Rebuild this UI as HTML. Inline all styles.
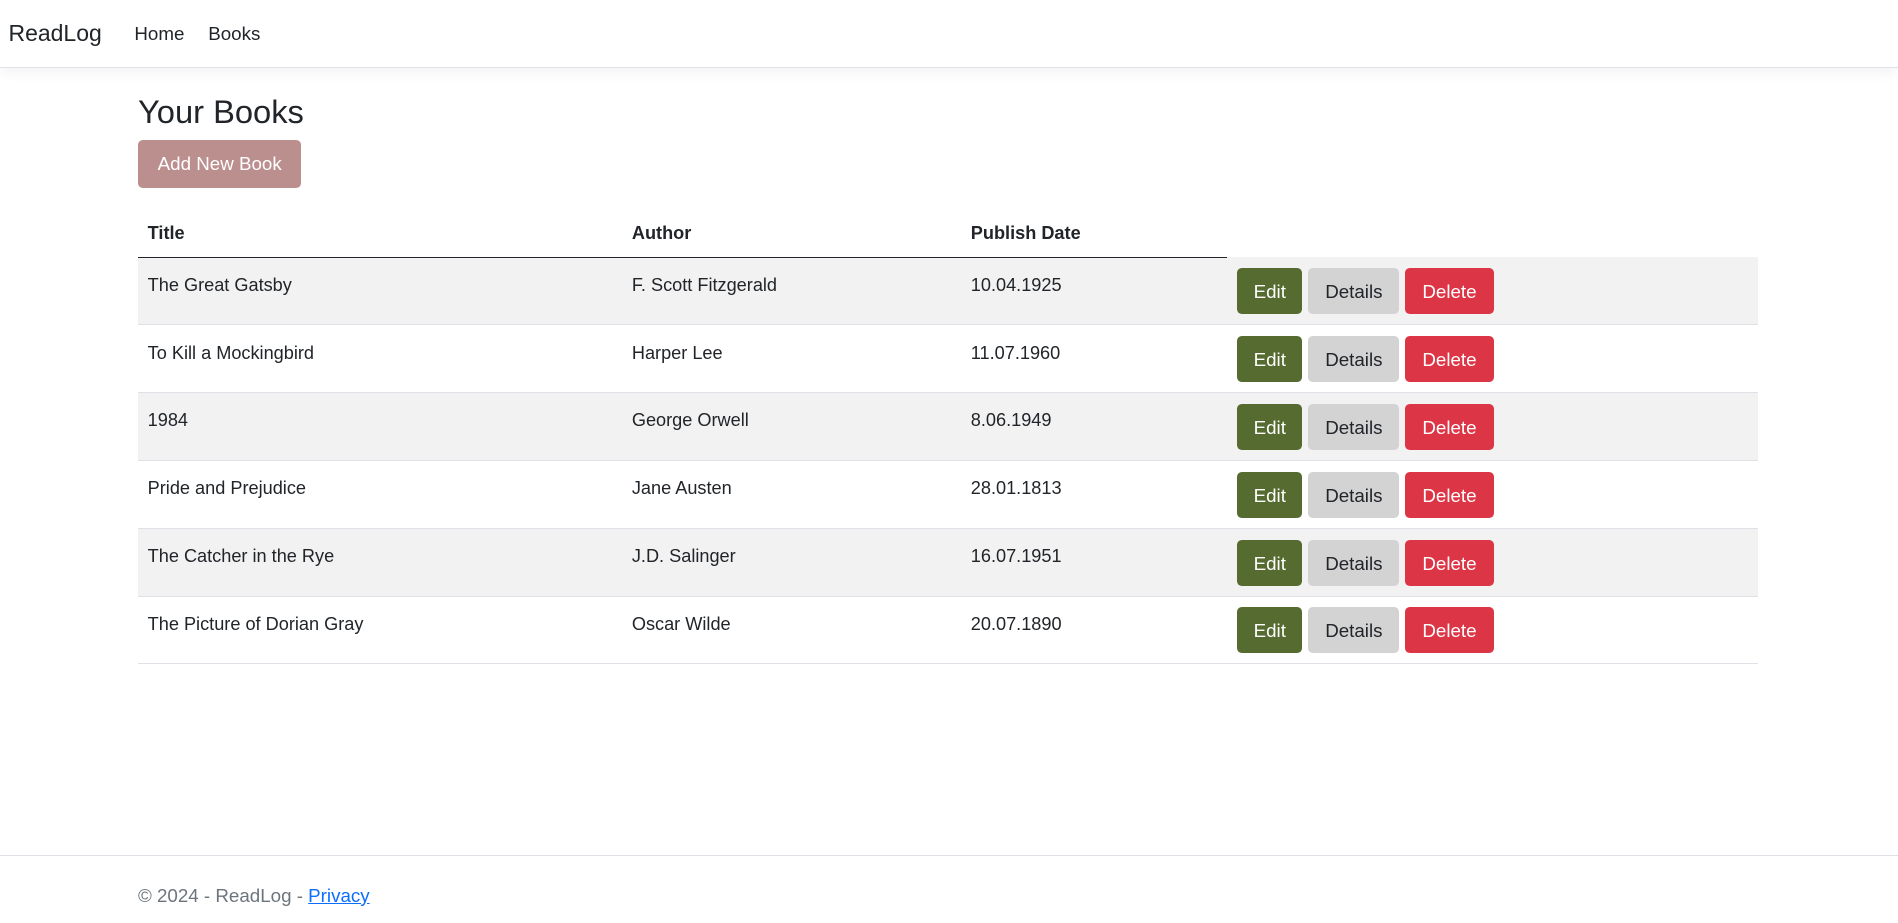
<!DOCTYPE html>
<html><head><meta charset="utf-8"><style>
html{zoom:1.2105}
body{margin:0;width:1568px;height:762px;position:relative;font-family:"Liberation Sans","DejaVu Sans",sans-serif;color:#212529;font-size:15px;background:#fff;overflow:hidden}
.nav{position:absolute;left:0;top:0;width:1568px;height:55px;border-bottom:1px solid #dee2e6;box-shadow:0 4px 10px rgba(0,0,0,.05);background:#fff}
.brand{position:absolute;left:7px;top:16px;font-size:19px;line-height:24px}
.nl{position:absolute;top:18px;font-size:15.5px;line-height:20px}
h1{position:absolute;left:114px;top:74px;margin:0;font-size:27px;font-weight:500;line-height:36px}
.add{position:absolute;left:114px;top:116px;width:135px;height:39px;background:#bc8f8f;color:#fff;border-radius:4px;font-size:15.5px;line-height:40px;text-align:center}
table{position:absolute;left:114px;top:174px;width:1338px;border-collapse:collapse}
th{text-align:left;font-weight:bold;padding:0 8px;height:38px;border-bottom:1px solid #212529;font-size:15px}
th.e{border-bottom:none}
td{padding:0 8px;height:56px;border-bottom:1px solid #dee2e6;vertical-align:top;font-size:15px;line-height:24px;box-sizing:border-box}
td.t{padding-top:11px}
tr.s td{background:#f2f2f2}
.b{display:inline-block;height:38px;line-height:40px;border-radius:4px;text-align:center;font-size:15.5px;margin-top:9px;margin-right:1px}
.ed{width:54px;background:#556b2f;color:#fff}
.de{width:75px;background:#d3d3d3;color:#212529;margin-left:4px}
.dl{width:73px;background:#dc3545;color:#fff;margin-left:4px}
.foot{position:absolute;left:0;top:706px;width:1568px;border-top:1px solid #dee2e6}
.ft{position:absolute;left:114px;top:730px;color:#6c757d;font-size:15.5px;line-height:20px}
.ft a{color:#0d6efd;text-decoration:underline}
</style></head><body>
<div class="nav"><div class="brand">ReadLog</div><div class="nl" style="left:111px">Home</div><div class="nl" style="left:172px">Books</div></div>
<h1>Your Books</h1>
<div class="add">Add New Book</div>
<table>
<colgroup><col style="width:400px"><col style="width:280px"><col style="width:220px"><col></colgroup>
<tr><th>Title</th><th>Author</th><th>Publish Date</th><th class="e"></th></tr>
<tr class="s"><td class="t">The Great Gatsby</td><td class="t">F. Scott Fitzgerald</td><td class="t">10.04.1925</td><td><span class="b ed">Edit</span><span class="b de">Details</span><span class="b dl">Delete</span></td></tr>
<tr><td class="t">To Kill a Mockingbird</td><td class="t">Harper Lee</td><td class="t">11.07.1960</td><td><span class="b ed">Edit</span><span class="b de">Details</span><span class="b dl">Delete</span></td></tr>
<tr class="s"><td class="t">1984</td><td class="t">George Orwell</td><td class="t">8.06.1949</td><td><span class="b ed">Edit</span><span class="b de">Details</span><span class="b dl">Delete</span></td></tr>
<tr><td class="t">Pride and Prejudice</td><td class="t">Jane Austen</td><td class="t">28.01.1813</td><td><span class="b ed">Edit</span><span class="b de">Details</span><span class="b dl">Delete</span></td></tr>
<tr class="s"><td class="t">The Catcher in the Rye</td><td class="t">J.D. Salinger</td><td class="t">16.07.1951</td><td><span class="b ed">Edit</span><span class="b de">Details</span><span class="b dl">Delete</span></td></tr>
<tr><td class="t">The Picture of Dorian Gray</td><td class="t">Oscar Wilde</td><td class="t">20.07.1890</td><td><span class="b ed">Edit</span><span class="b de">Details</span><span class="b dl">Delete</span></td></tr>
</table>
<div class="foot"></div>
<div class="ft">© 2024 - ReadLog - <a>Privacy</a></div>
</body></html>
